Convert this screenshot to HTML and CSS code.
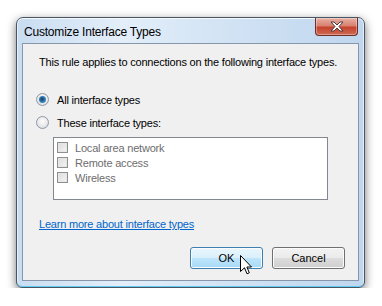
FILE: index.html
```html
<!DOCTYPE html>
<html lang="en">
<head>
    <meta charset="UTF-8">
    <title>Customize Interface Types</title>
    <link rel="stylesheet" href="styles.css">
</head>
<body>

<div class="stage">
    <div class="window">
        <div class="titlebar">
            <span class="title">Customize Interface Types</span>
            <div class="close-btn">
                <svg width="16" height="11" viewBox="0 0 16 11">
                    <path d="M2 1 L5 1 L8 4 L11 1 L14 1 L10 5.5 L14 10 L11 10 L8 7 L5 10 L2 10 L6 5.5 Z" fill="#fff" stroke="#4a3b3b" stroke-width="1" stroke-linejoin="round"/>
                </svg>
            </div>
        </div>

        <div class="client">
            <p class="intro">This rule applies to connections on the following interface types.</p>

            <div class="option">
                <span class="radio checked"></span>
                <span>All interface types</span>
            </div>
            <div class="option">
                <span class="radio"></span>
                <span>These interface types:</span>
            </div>

            <div class="listbox">
                <div class="item"><span class="check"></span>Local area network</div>
                <div class="item"><span class="check"></span>Remote access</div>
                <div class="item"><span class="check"></span>Wireless</div>
            </div>

            <a class="learn-link" href="#">Learn more about interface types</a>

            <div class="buttons">
                <button class="btn btn-hover">OK</button>
                <button class="btn">Cancel</button>
                <svg class="cursor" width="13" height="20" viewBox="0 0 13 20">
                    <path d="M0.5 0.5 L0.5 16.5 L4.5 12.8 L7 18.8 L9.3 17.8 L6.9 12 L11.5 12 Z" fill="#fff" stroke="#000" stroke-width="1" stroke-linejoin="miter"/>
                </svg>
            </div>
        </div>
    </div>
</div>

</body>
</html>
```

FILE: styles.css
```css
body, html {
    margin: 0;
    padding: 0;
    background: #fff;
    font-family: "Liberation Sans", Arial, sans-serif;
    font-size: 11px;
    letter-spacing: -0.2px;
}

.stage {
    padding: 17px 0 0 16px;
}

.window {
    width: 337px;
    height: 264px;
    padding: 0 5px 5px 5px;
    border: 1px solid #4a5563;
    border-radius: 7px 7px 6px 6px;
    background: linear-gradient(to right, #c9ddf1 0%, #e3eef9 30%, #d2e3f4 60%, #bfd6ee 100%);
    box-shadow: 0 3px 10px rgba(0, 0, 0, 0.55), inset 0 1px 0 #f4f9fe, inset 0 -1px 0 #5ecbf3, inset 1px 0 0 #e6f0fa, inset -1px 0 0 #e6f0fa;
}

.titlebar {
    height: 25px;
    display: flex;
    justify-content: space-between;
    align-items: flex-start;
}

.title {
    margin-top: 7px;
    margin-left: 2px;
    font-size: 12px;
    color: #000;
}

.close-btn {
    width: 41px;
    height: 17px;
    margin-right: 1px;
    border: 1px solid #6b2e28;
    border-top: none;
    border-radius: 0 0 4px 4px;
    background: linear-gradient(to bottom, #e8b1a7 0%, #d9826f 45%, #c4432f 55%, #cf6a52 100%);
    box-shadow: inset 0 0 0 1px rgba(255, 255, 255, 0.35);
    display: flex;
    align-items: center;
    justify-content: center;
}

.client {
    height: 236px;
    background: #f0f0f0;
    border: 1px solid #8696ab;
    padding: 0 13px 0 13px;
    position: relative;
}

.intro {
    margin: 11px 0 0 3px;
    line-height: 15px;
    white-space: nowrap;
}

.option {
    display: flex;
    align-items: center;
    gap: 8px;
    height: 15px;
    margin-top: 8px;
}

.option:first-of-type {
    margin-top: 22px;
}

.radio {
    width: 11px;
    height: 11px;
    border: 1px solid #8d9aa6;
    border-radius: 50%;
    background: radial-gradient(circle at 50% 40%, #ffffff 0%, #e6e6e6 60%, #cfd3d6 100%);
    position: relative;
}

.radio.checked::after {
    content: "";
    position: absolute;
    left: 2px;
    top: 2px;
    width: 7px;
    height: 7px;
    border-radius: 50%;
    background: radial-gradient(circle at 45% 45%, #1d3b5c 0%, #2a74ad 45%, #58b4e8 100%);
}

.listbox {
    margin: 7px 17px 0 17px;
    height: 59px;
    border: 1px solid #828790;
    background: #fff;
    padding-top: 2px;
    box-sizing: content-box;
}

.item {
    display: flex;
    align-items: center;
    gap: 7px;
    height: 15px;
    padding-left: 3px;
    color: #6d6d6d;
}

.check {
    width: 9px;
    height: 9px;
    border: 1px solid #8f8f8f;
    background: linear-gradient(135deg, #dcdcdc, #f4f4f4);
    box-shadow: inset 0 0 0 1px #e6e6e6;
}

.learn-link {
    display: block;
    margin: 17px 0 0 3px;
    width: max-content;
    color: #0066cc;
    text-decoration: underline;
    line-height: 15px;
}

.buttons {
    display: flex;
    justify-content: flex-end;
    gap: 9px;
    margin-top: 15px;
    position: relative;
}

.btn {
    width: 73px;
    height: 22px;
    font-family: "Liberation Sans", Arial, sans-serif;
    font-size: 11px;
    color: #000;
    border: 1px solid #707070;
    border-radius: 3px;
    background: linear-gradient(to bottom, #f2f2f2 0%, #ebebeb 49%, #dddddd 50%, #cfcfcf 100%);
    box-shadow: inset 0 0 0 1px #fbfbfb;
    padding: 0;
}

.btn-hover {
    border-color: #3c7fb1;
    background: linear-gradient(to bottom, #eaf6fd 0%, #d9f0fc 49%, #bee6fd 50%, #a7d9f5 100%);
}

.cursor {
    position: absolute;
    left: 204px;
    top: 8px;
}
```
